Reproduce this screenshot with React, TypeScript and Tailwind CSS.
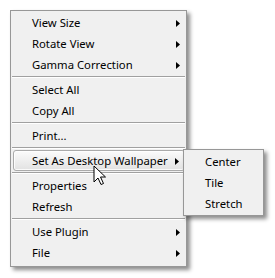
import React from "react";

type Item = { label: string; sub?: boolean; hl?: boolean } | "sep";

const items: Item[] = [
  { label: "View Size", sub: true },
  { label: "Rotate View", sub: true },
  { label: "Gamma Correction", sub: true },
  "sep",
  { label: "Select All" },
  { label: "Copy All" },
  "sep",
  { label: "Print..." },
  "sep",
  { label: "Set As Desktop Wallpaper", sub: true, hl: true },
  "sep",
  { label: "Properties" },
  { label: "Refresh" },
  "sep",
  { label: "Use Plugin", sub: true },
  { label: "File", sub: true },
];

function Arrow() {
  return (
    <svg width="4" height="7" viewBox="0 0 4 7" className="block shrink-0">
      <polygon points="0,0 4,3.5 0,7" fill="#000" />
    </svg>
  );
}

export default function App() {
  return (
    <div
      className="relative w-[275px] h-[278px] bg-white pl-[10px] pt-[10px] text-[11.3px] text-black whitespace-nowrap"
      style={{ fontFamily: '"Noto Sans", sans-serif' }}
    >
      <div className="w-[177px] border border-[#979797] bg-[#f0f0f0] pt-[1px] pb-[3px] shadow-[3px_3px_4px_rgba(0,0,0,0.45)]">
        {items.map((it, i) =>
          it === "sep" ? (
            <div key={i} className="h-[4px] pt-[1px] px-[1px]">
              <div className="h-[1px] bg-[#a0a0a0]" />
              <div className="h-[1px] bg-white" />
            </div>
          ) : it.hl ? (
            <div key={i} className="h-[21px] pl-[2px] pr-[1px] py-0">
              <div className="h-[21px] flex items-center justify-between pl-[18px] pr-[5px] pt-[1px] rounded-[3px] border border-[#aaaaaa] bg-gradient-to-b from-[#fbfbfb] to-[#e2e2e2] shadow-[inset_0_0_0_1px_rgba(255,255,255,0.8)]">
                <span className="leading-none">{it.label}</span>
                <Arrow />
              </div>
            </div>
          ) : (
            <div key={i} className="h-[21px] flex items-center justify-between pl-[21px] pr-[6px] pt-[1px]">
              <span className="leading-none">{it.label}</span>
              {it.sub && <Arrow />}
            </div>
          )
        )}
      </div>

      {/* Submenu */}
      <div className="absolute left-[183px] top-[149px] w-[81px] border border-[#979797] bg-[#f0f0f0] py-[1px] shadow-[3px_3px_4px_rgba(0,0,0,0.45)]">
        {["Center", "Tile", "Stretch"].map((s) => (
          <div key={s} className="h-[21px] flex items-center pl-[21px] pt-[1px]">
            <span className="leading-none">{s}</span>
          </div>
        ))}
      </div>

      {/* Cursor */}
      <svg
        className="absolute left-[93px] top-[165px]"
        width="14"
        height="22"
        viewBox="0 0 14 22"
      >
        <polygon
          points="1,1 1,17 5,13 8,19.5 10.5,18.5 7.5,12 12.5,12"
          fill="#fff"
          stroke="#000"
          strokeWidth="1"
          strokeLinejoin="miter"
        />
      </svg>
    </div>
  );
}
